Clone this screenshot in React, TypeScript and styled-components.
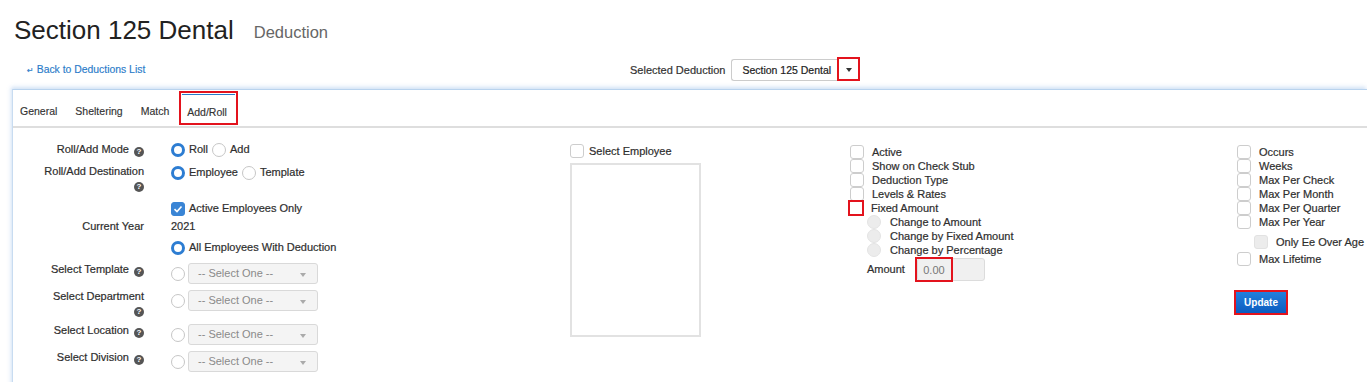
import React from 'react';
import styled, { createGlobalStyle } from 'styled-components';

const GlobalStyle = createGlobalStyle`
  html, body { margin: 0; padding: 0; background: #fff; }
  body {
    font-family: "Liberation Sans", Arial, sans-serif;
    font-size: 11px;
    color: #333;
  }
`;

const Page = styled.div`
  width: 1367px;
  height: 382px;
  overflow: hidden;
`;

const TitleRow = styled.div`
  display: flex;
  align-items: baseline;
  gap: 20px;
  padding: 15px 0 0 14px;
  height: 30px;
`;

const Title = styled.h1`
  margin: 0;
  font-size: 26px;
  line-height: 30px;
  font-weight: 400;
  color: #222;
`;

const Subtitle = styled.span`
  font-size: 16.5px;
  color: #666;
  position: relative;
  top: -1px;
`;

const SubRow = styled.div`
  display: grid;
  grid-template-columns: 603px auto;
  align-items: center;
  height: 25px;
  margin-top: 12px;
  padding-left: 27px;
`;

const BackLink = styled.a`
  color: #2a7bc9;
  font-size: 10.4px;
  text-decoration: none;
  -webkit-text-stroke: 0.15px;
`;

const ReturnArrow = styled.span`
  font-family: "DejaVu Sans", sans-serif;
  font-size: 8px;
  margin-right: 3px;
`;

const SelectedGroup = styled.div`
  display: flex;
  align-items: center;
  gap: 6px;
  -webkit-text-stroke: 0.2px;
`;

const DeductionSelect = styled.div`
  display: flex;
  align-items: center;
  box-sizing: border-box;
  width: 106px;
  height: 22px;
  padding-left: 10px;
  border: 1px solid #ccc;
  border-right: none;
  border-radius: 3px 0 0 3px;
  color: #222;
  font-size: 10.5px;
`;

const ArrowCell = styled.div`
  display: flex;
  align-items: center;
  justify-content: center;
  box-sizing: border-box;
  width: 23px;
  height: 24px;
  margin-top: -2px;
  border: 2px solid #e3131d;
`;

const Caret = styled.span<{ $color?: string; $size?: number }>`
  display: block;
  width: 0;
  height: 0;
  margin-top: 3px;
  border-left: ${(p) => p.$size ?? 3}px solid transparent;
  border-right: ${(p) => p.$size ?? 3}px solid transparent;
  border-top: ${(p) => (p.$size ?? 3) + 1}px solid ${(p) => p.$color ?? '#333'};
`;

const Panel = styled.div`
  margin: 7px 0 0 12px;
  height: 300px;
  border-top: 1px solid #b9d3ee;
  border-left: 1px solid #c8dcf1;
  box-shadow: -1px -2px 4px rgba(120, 170, 225, 0.35);
  background: #fff;
`;

const TabBar = styled.div`
  box-sizing: border-box;
  display: flex;
  align-items: center;
  gap: 18px;
  height: 38px;
  padding: 6px 0 0 7px;
  border-bottom: 2px solid #dedede;
  font-size: 10.5px;
  color: #333;
  -webkit-text-stroke: 0.15px;
`;

const Tab = styled.div<{ $active?: boolean }>`
  display: flex;
  align-items: center;
  line-height: 13px;
  ${(p) =>
    p.$active &&
    `
    box-sizing: border-box;
    align-self: flex-start;
    height: 28px;
    margin: -2px 0 0 -5px;
    padding: 8px 8px 0 5px;
    border-top: 1px solid #2a7bc9;
    outline: 2px solid #e3131d;
    outline-offset: 1px;
  `}
`;

const Content = styled.div`
  display: grid;
  grid-template-columns: 530px 280px 387px 1fr;
  padding: 15px 0 0 27px;
  color: #2e2e2e;
  -webkit-text-stroke: 0.2px;
`;

const FormGrid = styled.div`
  display: grid;
  grid-template-columns: 104px auto;
  column-gap: 27px;
  align-content: start;
`;

const Label = styled.div<{ $h: number }>`
  height: ${(p) => p.$h}px;
  text-align: right;
  line-height: 13px;
`;

const Control = styled.div<{ $h: number }>`
  height: ${(p) => p.$h}px;
  display: flex;
  align-items: flex-start;
  gap: 4px;
  line-height: 13px;
`;

const HelpIcon = styled.span`
  display: inline-block;
  width: 10px;
  height: 10px;
  margin-left: 2px;
  border-radius: 50%;
  background: #555;
  color: #fff;
  font-size: 8px;
  font-weight: 700;
  line-height: 10px;
  text-align: center;
  vertical-align: -1px;
  -webkit-text-stroke: 0;
`;

const Option = styled.label`
  display: inline-flex;
  align-items: center;
  gap: 4px;
  height: 13px;
`;

const Radio = styled.span<{ $on?: boolean; $disabled?: boolean }>`
  box-sizing: border-box;
  flex: none;
  width: 14px;
  height: 14px;
  border-radius: 50%;
  background: ${(p) => (p.$disabled ? '#ececec' : '#fff')};
  border: ${(p) =>
    p.$on ? '3px solid #2d7dd2' : p.$disabled ? '1px solid #e4e4e4' : '1px solid #c6c6c6'};
`;

const Box = styled.span<{ $on?: boolean; $disabled?: boolean; $flag?: boolean }>`
  box-sizing: border-box;
  flex: none;
  display: flex;
  align-items: center;
  justify-content: center;
  width: 14px;
  height: 14px;
  border-radius: ${(p) => (p.$flag ? '0' : '3px')};
  background: ${(p) => (p.$on ? '#3a85d5' : p.$disabled ? '#ececec' : '#fff')};
  border: ${(p) =>
    p.$flag
      ? '2px solid #e3131d'
      : p.$on
      ? '1px solid #3a85d5'
      : p.$disabled
      ? '1px solid #e2e2e2'
      : '1px solid #cdcdcd'};
  ${(p) => p.$flag && 'width: 16px; height: 16px; margin: -1px -1px -1px -2px;'}
`;

const DropSelect = styled.div`
  box-sizing: border-box;
  display: flex;
  align-items: center;
  justify-content: space-between;
  width: 130px;
  height: 21px;
  padding: 0 11px 0 9px;
  border: 1px solid #d9d9d9;
  border-radius: 3px;
  background: #f4f4f4;
  color: #8a8a8a;
  -webkit-text-stroke: 0;
`;

const SelectRow = styled.div`
  display: flex;
  align-items: center;
  gap: 3px;
  height: 21px;
`;

const Column = styled.div<{ $pt?: number }>`
  display: flex;
  flex-direction: column;
  align-items: flex-start;
  padding-top: ${(p) => p.$pt ?? 0}px;
`;

const CheckRow = styled.div<{ $indent?: number; $mt?: number; $gap?: number }>`
  display: flex;
  align-items: center;
  gap: ${(p) => p.$gap ?? 8}px;
  height: 14px;
  line-height: 13px;
  padding-left: ${(p) => p.$indent ?? 0}px;
  margin-top: ${(p) => p.$mt ?? 0}px;
`;

const ListBox = styled.div`
  box-sizing: border-box;
  width: 131px;
  height: 174px;
  margin-top: 5px;
  border: 2px solid #e2e2e2;
`;

const AmountRow = styled.div`
  display: flex;
  align-items: center;
  gap: 12px;
  margin-top: 1px;
  padding-left: 17px;
`;

const AmountLabel = styled.span`
  position: relative;
  top: -1px;
`;

const AmountInput = styled.div`
  box-sizing: border-box;
  display: flex;
  align-items: center;
  width: 68px;
  height: 23px;
  border: 1px solid #dcdcdc;
  border-radius: 3px;
  background: #f0f0f0;
`;

const ValueMark = styled.span`
  box-sizing: border-box;
  display: flex;
  align-items: center;
  justify-content: center;
  width: 38px;
  height: 25px;
  margin: -2px 0 -2px -3px;
  border: 2px solid #e3131d;
  color: #777;
  -webkit-text-stroke: 0;
`;

const UpdateFrame = styled.div`
  margin: 24px 0 0 -3px;
  border: 2px solid #e3131d;
`;

const UpdateButton = styled.button`
  display: block;
  width: 50px;
  height: 21px;
  padding: 0;
  border: none;
  background: linear-gradient(#237fdb, #0b5cc0);
  color: #fff;
  font-family: "Liberation Sans", Arial, sans-serif;
  font-size: 10px;
  font-weight: 700;
  -webkit-text-stroke: 0;
`;

const Check = () => (
  <svg width="10" height="10" viewBox="0 0 10 10">
    <polyline points="1.5,5.2 4,7.5 8.5,2.5" fill="none" stroke="#fff" strokeWidth="1.6" />
  </svg>
);

const Help = () => <HelpIcon>?</HelpIcon>;

const Dropdown = () => (
  <SelectRow>
    <Radio />
    <DropSelect>
      -- Select One --
      <Caret $color="#aaa" />
    </DropSelect>
  </SelectRow>
);

const fieldChecks = ['Active', 'Show on Check Stub', 'Deduction Type', 'Levels & Rates'];
const changeOptions = ['Change to Amount', 'Change by Fixed Amount', 'Change by Percentage'];
const limitChecks = ['Occurs', 'Weeks', 'Max Per Check', 'Max Per Month', 'Max Per Quarter', 'Max Per Year'];

export default function App() {
  return (
    <Page>
      <GlobalStyle />
      <TitleRow>
        <Title>Section 125 Dental</Title>
        <Subtitle>Deduction</Subtitle>
      </TitleRow>

      <SubRow>
        <BackLink href="#">
          <ReturnArrow>↵</ReturnArrow>Back to Deductions List
        </BackLink>
        <SelectedGroup>
          <span>Selected Deduction</span>
          <div style={{ display: 'flex', alignItems: 'center' }}>
            <DeductionSelect>Section 125 Dental</DeductionSelect>
            <ArrowCell>
              <Caret />
            </ArrowCell>
          </div>
        </SelectedGroup>
      </SubRow>

      <Panel>
        <TabBar>
          <Tab>General</Tab>
          <Tab>Sheltering</Tab>
          <Tab>Match</Tab>
          <Tab $active>Add/Roll</Tab>
        </TabBar>

        <Content>
          <FormGrid>
            <Label $h={22}>
              Roll/Add Mode <Help />
            </Label>
            <Control $h={22}>
              <Option><Radio $on />Roll</Option>
              <Option><Radio />Add</Option>
            </Control>

            <Label $h={36}>
              Roll/Add Destination <Help />
            </Label>
            <Control $h={36} style={{ paddingTop: 1 }}>
              <Option><Radio $on />Employee</Option>
              <Option><Radio />Template</Option>
            </Control>

            <Label $h={18} />
            <Control $h={18}>
              <Option><Box $on><Check /></Box>Active Employees Only</Option>
            </Control>

            <Label $h={21}>Current Year</Label>
            <Control $h={21}>2021</Control>

            <Label $h={22} />
            <Control $h={22}>
              <Option><Radio $on />All Employees With Deduction</Option>
            </Control>

            <Label $h={27}>
              Select Template <Help />
            </Label>
            <Control $h={27}><Dropdown /></Control>

            <Label $h={34}>
              Select Department <Help />
            </Label>
            <Control $h={34}><Dropdown /></Control>

            <Label $h={27}>
              Select Location <Help />
            </Label>
            <Control $h={27}><Dropdown /></Control>

            <Label $h={27}>
              Select Division <Help />
            </Label>
            <Control $h={27}><Dropdown /></Control>
          </FormGrid>

          <Column $pt={1}>
            <CheckRow $gap={5}>
              <Box />
              Select Employee
            </CheckRow>
            <ListBox />
          </Column>

          <Column $pt={2}>
            {fieldChecks.map((name) => (
              <CheckRow key={name}>
                <Box />
                {name}
              </CheckRow>
            ))}
            <CheckRow>
              <Box $flag />
              Fixed Amount
            </CheckRow>
            {changeOptions.map((name) => (
              <CheckRow key={name} $indent={17} $gap={9}>
                <Radio $disabled />
                {name}
              </CheckRow>
            ))}
            <AmountRow>
              <AmountLabel>Amount</AmountLabel>
              <AmountInput>
                <ValueMark>0.00</ValueMark>
              </AmountInput>
            </AmountRow>
          </Column>

          <Column $pt={2}>
            {limitChecks.map((name) => (
              <CheckRow key={name}>
                <Box />
                {name}
              </CheckRow>
            ))}
            <CheckRow $indent={17} $mt={6}>
              <Box $disabled />
              Only Ee Over Age
            </CheckRow>
            <CheckRow $mt={3}>
              <Box />
              Max Lifetime
            </CheckRow>
            <UpdateFrame>
              <UpdateButton>Update</UpdateButton>
            </UpdateFrame>
          </Column>
        </Content>
      </Panel>
    </Page>
  );
}
